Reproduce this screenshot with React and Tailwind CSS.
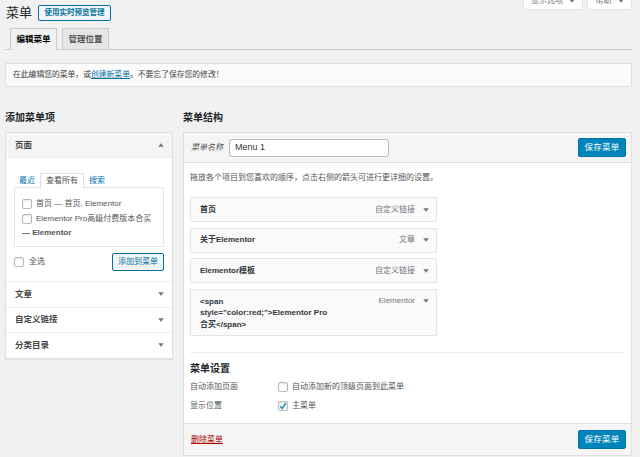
const font = { fontFamily: '"Liberation Sans","Noto Sans CJK SC",sans-serif' };

function Arrow({ up = false, className = "fill-[#72777c]" }) {
  return (
    <svg width="6" height="4" viewBox="0 0 6 4" className={className}>
      <path d={up ? "M3 0.2 L5.8 3.8 L0.2 3.8 Z" : "M0.2 0.2 L5.8 0.2 L3 3.8 Z"} />
    </svg>
  );
}

function Check({ checked = false }) {
  return (
    <span className="w-[10px] h-[10px] shrink-0 rounded-[2px] border border-[#b4b9be] bg-white shadow-[inset_0_1px_2px_rgba(0,0,0,0.1)] flex items-center justify-center">
      {checked && (
        <svg width="8" height="8" viewBox="0 0 8 8" fill="none">
          <path d="M1.2 4.2 L3.1 6.4 L6.8 1" stroke="#1e8cbe" strokeWidth="1.5" />
        </svg>
      )}
    </span>
  );
}

function SaveButton() {
  return (
    <button className="w-[48px] h-[19px] rounded-[2px] bg-[#0085ba] border border-[#0073aa] text-white text-[8.5px] tracking-[0.3px] flex items-center justify-center">
      保存菜单
    </button>
  );
}

function AccordionRow({ label }) {
  return (
    <div className="h-[25.5px] bg-white border-t border-[#eeeeee] flex items-center justify-between pl-[9px] pr-[8px] text-[8.5px] font-semibold text-[#444444]">
      <span>{label}</span>
      <Arrow />
    </div>
  );
}

function MenuItem({ title, type, tall = false }) {
  return (
    <div
      className={`w-[247px] bg-[#fafafa] border border-[#e5e5e5] flex justify-between pl-[9px] pr-[7px] ${tall ? "h-[47px] pt-[6px] items-start" : "h-[25px] mb-[5.5px] items-center"}`}
    >
      <span className="w-[132px] text-[8px] leading-[11.5px] font-bold text-[#32373c] break-words">{title}</span>
      <span className={`flex items-center gap-[8px] text-[8px] text-[#72777c] ${tall ? "h-[11px]" : ""}`}>
        {type}
        <Arrow />
      </span>
    </div>
  );
}

export default function App() {
  return (
    <div style={font} className="w-[640px] h-[457px] overflow-hidden bg-[#f1f1f1] pl-[5px] pr-[8px] text-[#444444] text-[8px]">
      <div className="h-[28px] flex items-start">
        <h1 className="text-[13px] leading-[16px] mt-[5px] ml-[1px] text-[#23282d]">菜单</h1>
        <button className="ml-[6px] mt-[5px] w-[73px] h-[16px] rounded-[2px] border border-[#0071a1] bg-[#f3f5f6] text-[#0071a1] text-[7.5px] font-semibold flex items-center justify-center">
          使用实时预览管理
        </button>
        <div className="ml-auto flex gap-[4px] -mt-[9px]">
          <div className="w-[60px] h-[19px] bg-white border border-[#e5e5e5] rounded-b-[2px] flex items-center justify-center gap-[6px] text-[8px] text-[#72777c]">
            显示选项 <Arrow />
          </div>
          <div className="w-[45px] h-[19px] bg-white border border-[#e5e5e5] rounded-b-[2px] flex items-center justify-center gap-[6px] text-[8px] text-[#72777c]">
            帮助 <Arrow />
          </div>
        </div>
      </div>

      <div className="h-[22px] border-b border-[#cccccc] flex items-end pl-[5px] gap-[5px]">
        <div className="w-[47px] h-[22px] -mb-px bg-[#f1f1f1] border border-[#cccccc] border-b-0 flex items-center justify-center text-[8.5px] font-semibold text-black">
          编辑菜单
        </div>
        <div className="w-[47px] h-[21px] bg-[#e5e5e5] border border-[#cccccc] border-b-0 flex items-center justify-center text-[8.5px] font-semibold text-[#555555]">
          管理位置
        </div>
      </div>

      <div className="mt-[13px] h-[24px] bg-[#fbfbfb] border border-[#e0e0e0] flex items-center pl-[7px] text-[7.8px] text-[#444444]">
        在此编辑您的菜单，或<span className="text-[#0073aa] underline">创建新菜单</span>。不要忘了保存您的修改！
      </div>

      <div className="mt-[23px] flex gap-[10px] items-start">
        <div className="w-[168px] shrink-0">
          <h2 className="h-[15px] mb-[7px] text-[10px] leading-[15px] font-semibold text-[#23282d]">添加菜单项</h2>
          <div className="border border-[#e0e0e0] shadow-[0_1px_1px_rgba(0,0,0,0.06)]">
            <div className="h-[25px] bg-[#f5f5f5] border-b border-[#eeeeee] flex items-center justify-between pl-[9px] pr-[8px] text-[8.5px] font-semibold text-[#444444]">
              <span>页面</span>
              <Arrow up />
            </div>
            <div className="h-[123px] bg-white px-[8px] pt-[15px]">
              <div className="h-[14px] flex items-end text-[8px] pl-[5px]">
                <span className="text-[#0073aa] h-[13px] leading-[13px]">最近</span>
                <span className="ml-[5px] w-[44px] h-[15px] -mb-px relative bg-white border border-[#e0e0e0] border-b-0 flex items-center justify-center text-[#555555]">查看所有</span>
                <span className="ml-[5px] text-[#0073aa] h-[13px] leading-[13px]">搜索</span>
              </div>
              <div className="h-[60px] border border-[#e6e6e6] pt-[9px] pl-[7px] text-[#555555] leading-[14.5px]">
                <div className="flex items-center gap-[4px] h-[14.5px]">
                  <Check />
                  <span>首页 — 首页, Elementor</span>
                </div>
                <div className="flex items-center gap-[4px] h-[14.5px]">
                  <Check />
                  <span>Elementor Pro高级付费版本合买</span>
                </div>
                <div className="h-[14.5px] font-semibold">— Elementor</div>
              </div>
              <div className="mt-[6px] flex items-center justify-between">
                <label className="flex items-center gap-[5px] text-[8px] text-[#555555]">
                  <Check />
                  全选
                </label>
                <button className="w-[52px] h-[18px] rounded-[2px] border border-[#0071a1] bg-[#f3f5f6] text-[#0071a1] text-[8px] flex items-center justify-center">
                  添加到菜单
                </button>
              </div>
            </div>
            <AccordionRow label="文章" />
            <AccordionRow label="自定义链接" />
            <AccordionRow label="分类目录" />
          </div>
        </div>

        <div className="flex-1 min-w-0">
          <h2 className="h-[15px] mb-[7px] text-[10px] leading-[15px] font-semibold text-[#23282d]">菜单结构</h2>
          <div className="border border-[#e0e0e0] bg-white">
            <div className="h-[30px] bg-[#f5f5f5] border-b border-[#dddddd] flex items-center pl-[7px] pr-[5px]">
              <span className="w-[38px] italic text-[8px] text-[#555555]">菜单名称</span>
              <div className="w-[160px] h-[18px] bg-white border border-[#b4b9be] rounded-[3px] flex items-center pl-[5px] text-[9px] text-[#32373c]">
                Menu 1
              </div>
              <div className="ml-auto">
                <SaveButton />
              </div>
            </div>
            <div className="h-[260px] px-[6px] pt-[9px]">
              <p className="h-[12px] leading-[12px] mb-[13px] text-[8px] text-[#555555]">
                拖放各个项目到您喜欢的顺序，点击右侧的箭头可进行更详细的设置。
              </p>
              <MenuItem title="首页" type="自定义链接" />
              <MenuItem title="关于Elementor" type="文章" />
              <MenuItem title="Elementor模板" type="自定义链接" />
              <MenuItem tall title={'<span style="color:red;">Elementor Pro合买</span>'} type="Elementor" />
              <div className="mt-[16px] border-t border-[#eeeeee] pt-[9px]">
                <h3 className="h-[14px] leading-[14px] text-[10px] font-semibold text-[#23282d]">菜单设置</h3>
                <div className="mt-[5px] h-[12px] flex items-center text-[8px] text-[#555555]">
                  <span className="w-[88px]">自动添加页面</span>
                  <Check />
                  <span className="ml-[4px]">自动添加新的顶级页面到此菜单</span>
                </div>
                <div className="mt-[7px] h-[12px] flex items-center text-[8px] text-[#555555]">
                  <span className="w-[88px]">显示位置</span>
                  <Check checked />
                  <span className="ml-[4px]">主菜单</span>
                </div>
              </div>
            </div>
            <div className="h-[32px] bg-[#f5f5f5] border-t border-[#dddddd] flex items-center justify-between pl-[7px] pr-[5px]">
              <span className="text-[#a00] underline text-[8px]">删除菜单</span>
              <SaveButton />
            </div>
          </div>
        </div>
      </div>
    </div>
  );
}
